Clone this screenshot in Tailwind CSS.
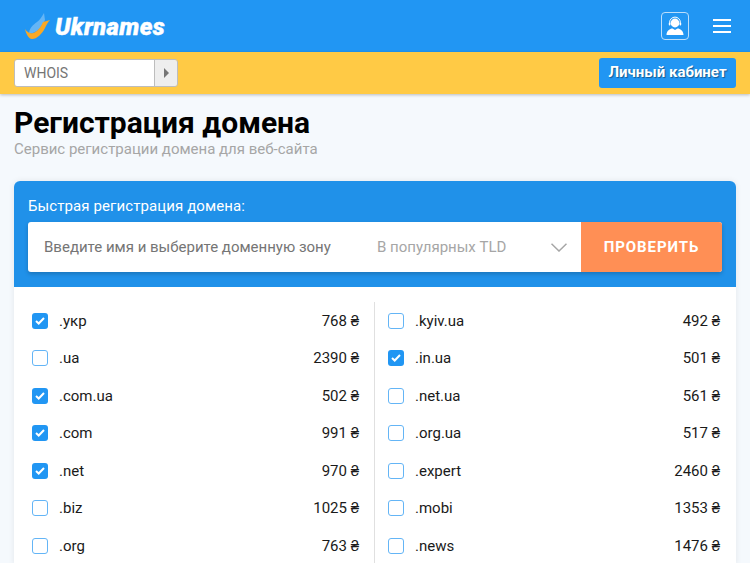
<!DOCTYPE html>
<html lang="ru">
<head>
  <meta charset="UTF-8">
  <title>Регистрация домена</title>
  <script src="https://cdn.jsdelivr.net/npm/@tailwindcss/browser@4"></script>
</head>
<body class="bg-[#f5f9fd] h-[563px] overflow-hidden font-[Roboto,sans-serif] text-[#212121]">

  <!-- header -->
  <header class="h-[52px] bg-[#2196f3] flex items-center justify-between pl-[24px] pr-[19px]">
    <div class="flex items-center gap-[3px]">
      <svg width="28" height="28" viewBox="0 0 28 28" class="-mt-[1px]">
        <path d="M5 21 C6 15 9 13 13 10 C16 8 18 4 20 1 L21 8 C19 12 16 16 14 18 C11 20 8 22 5 21Z" fill="#64b5f6"/>
        <path d="M1 17 C3 20 6 22 9 21 C13 20 17 15 19 10 L26 8 C24 10 23 12 21 16 C18 22 13 27 8 27 C5 27 2 22 1 17Z" fill="#f9a825"/>
      </svg>
      <span class="text-[24px] font-black italic text-white tracking-[0.35px] leading-none mt-[2px] [-webkit-text-stroke:0.4px_white]">Ukrnames</span>
    </div>
    <div class="flex items-center gap-[24px]">
      <div class="w-[28px] h-[28px] border border-[#bbdefb] rounded-[4px] flex items-center justify-center">
        <svg width="20" height="20" viewBox="0 0 20 20">
          <circle cx="10" cy="7" r="4.4" fill="#fff"/>
          <path d="M4.6 8 V6.500 A5.400 5.400 0 0 1 15.400 6.500 V8" fill="none" stroke="#fff" stroke-width="1"/>
          <rect x="3.800" y="6.400" width="1.600" height="3" rx=".7" fill="#fff"/>
          <rect x="14.600" y="6.400" width="1.600" height="3" rx=".7" fill="#fff"/>
          <path d="M1.500 19 C1.500 15 5 12.600 7.500 12.600 L10 14 L12.500 12.600 C15 12.600 18.500 15 18.500 19Z" fill="#fff"/>
        </svg>
      </div>
      <div class="w-[18px] flex flex-col gap-[4px]">
        <span class="h-[2px] bg-white"></span>
        <span class="h-[2px] bg-white"></span>
        <span class="h-[2px] bg-white"></span>
      </div>
    </div>
  </header>

  <!-- yellow bar -->
  <div class="h-[42px] bg-[#ffca45] flex items-center justify-between px-[14px] shadow-[0_1px_3px_rgba(0,0,0,0.25)] relative">
    <div class="w-[164px] h-[28px] flex border border-[#bdbdbd] rounded-[3px] overflow-hidden -mt-[1px]">
      <div class="flex-1 bg-white pl-[9px] text-[14px] leading-[26px] text-[#757575]">WHOIS</div>
      <div class="w-[23px] bg-[#eeeeee] border-l border-[#bdbdbd] flex items-center justify-center">
        <span class="w-0 h-0 border-y-[5px] border-y-transparent border-l-[5px] border-l-[#757575]"></span>
      </div>
    </div>
    <button class="h-[30px] w-[137px] bg-[#2196f3] rounded-[3px] text-white text-[15px] font-bold [text-shadow:1px_1px_1px_rgba(0,0,0,0.4)] -mt-[1px]">Личный кабинет</button>
  </div>

  <main class="px-[14px]">
    <h1 class="mt-[12px] text-[30px] leading-[34px] font-bold text-black">Регистрация домена</h1>
    <p class="text-[15px] leading-[18px] text-[#a6a6a6]">Сервис регистрации домена для веб-сайта</p>

    <section class="mt-[23px] rounded-t-[6px] bg-white shadow-[0_0_6px_rgba(0,0,0,0.08)]">
      <div class="h-[106px] bg-[#2091e9] rounded-t-[6px] px-[14px] pt-[16px]">
        <div class="text-[15px] leading-[18px] text-white tracking-[0.1px]">Быстрая регистрация домена:</div>
        <div class="mt-[7px] h-[50px] flex bg-white rounded-[3px] overflow-hidden shadow-[0_2px_4px_rgba(0,0,0,0.2)]">
          <div class="w-[333px] pl-[16px] text-[15px] leading-[50px] text-[#757575]">Введите имя и выберите доменную зону</div>
          <div class="w-[220px] pl-[16px] pr-[14px] flex items-center justify-between text-[15px] text-[#a6a6a6]">
            <span>В популярных TLD</span>
            <svg width="16" height="9" viewBox="0 0 16 9" fill="none" stroke="#a6a6a6" stroke-width="1.500"><path d="M.5 .7 L8 8 L15.500 .7"/></svg>
          </div>
          <button class="flex-1 bg-[#ff8f55] text-white text-[15px] font-bold tracking-[0.9px]">ПРОВЕРИТЬ</button>
        </div>
      </div>

      <div class="grid grid-cols-2 pt-[15px] text-[15px] text-[#1a1a1a]">
        <ul class="pl-[18px] pr-[15px] border-r border-[#e0e0e0]">
          <li class="h-[37.500px] flex items-center">
            <span class="w-[16px] h-[16px] rounded-[3px] bg-[#2196f3] flex items-center justify-center"><svg width="10" height="8" viewBox="0 0 10 8" fill="none" stroke="#fff" stroke-width="2"><path d="M1 4 L3.700 6.500 L9 1"/></svg></span>
            <span class="ml-[11px]">.укр</span><span class="ml-auto">768 ₴</span>
          </li>
          <li class="h-[37.500px] flex items-center">
            <span class="w-[16px] h-[16px] rounded-[3px] border border-[#64b5f6] bg-white"></span>
            <span class="ml-[11px]">.ua</span><span class="ml-auto">2390 ₴</span>
          </li>
          <li class="h-[37.500px] flex items-center">
            <span class="w-[16px] h-[16px] rounded-[3px] bg-[#2196f3] flex items-center justify-center"><svg width="10" height="8" viewBox="0 0 10 8" fill="none" stroke="#fff" stroke-width="2"><path d="M1 4 L3.700 6.500 L9 1"/></svg></span>
            <span class="ml-[11px]">.com.ua</span><span class="ml-auto">502 ₴</span>
          </li>
          <li class="h-[37.500px] flex items-center">
            <span class="w-[16px] h-[16px] rounded-[3px] bg-[#2196f3] flex items-center justify-center"><svg width="10" height="8" viewBox="0 0 10 8" fill="none" stroke="#fff" stroke-width="2"><path d="M1 4 L3.700 6.500 L9 1"/></svg></span>
            <span class="ml-[11px]">.com</span><span class="ml-auto">991 ₴</span>
          </li>
          <li class="h-[37.500px] flex items-center">
            <span class="w-[16px] h-[16px] rounded-[3px] bg-[#2196f3] flex items-center justify-center"><svg width="10" height="8" viewBox="0 0 10 8" fill="none" stroke="#fff" stroke-width="2"><path d="M1 4 L3.700 6.500 L9 1"/></svg></span>
            <span class="ml-[11px]">.net</span><span class="ml-auto">970 ₴</span>
          </li>
          <li class="h-[37.500px] flex items-center">
            <span class="w-[16px] h-[16px] rounded-[3px] border border-[#64b5f6] bg-white"></span>
            <span class="ml-[11px]">.biz</span><span class="ml-auto">1025 ₴</span>
          </li>
          <li class="h-[37.500px] flex items-center">
            <span class="w-[16px] h-[16px] rounded-[3px] border border-[#64b5f6] bg-white"></span>
            <span class="ml-[11px]">.org</span><span class="ml-auto">763 ₴</span>
          </li>
        </ul>
        <ul class="pl-[13px] pr-[16px]">
          <li class="h-[37.500px] flex items-center">
            <span class="w-[16px] h-[16px] rounded-[3px] border border-[#64b5f6] bg-white"></span>
            <span class="ml-[11px]">.kyiv.ua</span><span class="ml-auto">492 ₴</span>
          </li>
          <li class="h-[37.500px] flex items-center">
            <span class="w-[16px] h-[16px] rounded-[3px] bg-[#2196f3] flex items-center justify-center"><svg width="10" height="8" viewBox="0 0 10 8" fill="none" stroke="#fff" stroke-width="2"><path d="M1 4 L3.700 6.500 L9 1"/></svg></span>
            <span class="ml-[11px]">.in.ua</span><span class="ml-auto">501 ₴</span>
          </li>
          <li class="h-[37.500px] flex items-center">
            <span class="w-[16px] h-[16px] rounded-[3px] border border-[#64b5f6] bg-white"></span>
            <span class="ml-[11px]">.net.ua</span><span class="ml-auto">561 ₴</span>
          </li>
          <li class="h-[37.500px] flex items-center">
            <span class="w-[16px] h-[16px] rounded-[3px] border border-[#64b5f6] bg-white"></span>
            <span class="ml-[11px]">.org.ua</span><span class="ml-auto">517 ₴</span>
          </li>
          <li class="h-[37.500px] flex items-center">
            <span class="w-[16px] h-[16px] rounded-[3px] border border-[#64b5f6] bg-white"></span>
            <span class="ml-[11px]">.expert</span><span class="ml-auto">2460 ₴</span>
          </li>
          <li class="h-[37.500px] flex items-center">
            <span class="w-[16px] h-[16px] rounded-[3px] border border-[#64b5f6] bg-white"></span>
            <span class="ml-[11px]">.mobi</span><span class="ml-auto">1353 ₴</span>
          </li>
          <li class="h-[37.500px] flex items-center">
            <span class="w-[16px] h-[16px] rounded-[3px] border border-[#64b5f6] bg-white"></span>
            <span class="ml-[11px]">.news</span><span class="ml-auto">1476 ₴</span>
          </li>
        </ul>
      </div>
    </section>
  </main>

</body>
</html>
